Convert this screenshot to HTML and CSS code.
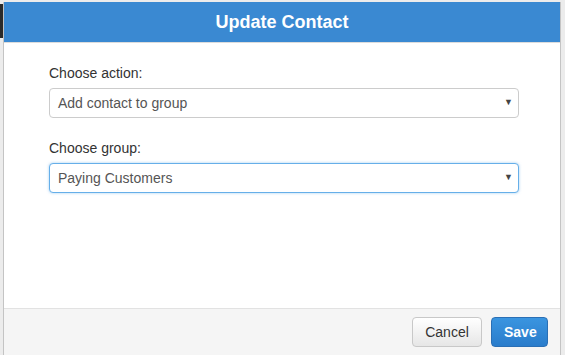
FILE: index.html
```html
<!DOCTYPE html>
<html>
<head>
<meta charset="utf-8">
<link rel="stylesheet" href="styles.css">
</head>
<body>
<div class="backdrop-strip"></div>
<div class="dialog">
  <div class="header">Update Contact</div>
  <div class="content">
    <div class="field">
      <label class="label">Choose action:</label>
      <div class="select">
        <span class="select-text">Add contact to group</span>
        <span class="caret">&#9660;</span>
      </div>
    </div>
    <div class="field">
      <label class="label">Choose group:</label>
      <div class="select focused">
        <span class="select-text">Paying Customers</span>
        <span class="caret">&#9660;</span>
      </div>
    </div>
  </div>
  <div class="footer">
    <button class="btn btn-default">Cancel</button>
    <button class="btn btn-primary">Save</button>
  </div>
</div>
</body>
</html>
```
FILE: styles.css
```css
html, body {
  margin: 0;
  padding: 0;
  height: 100%;
  overflow: hidden;
}
body {
  background: #ececec;
  font-family: "Liberation Sans", Arial, sans-serif;
  font-size: 14px;
  color: #333;
  padding: 2px 4px 0 3px;
  box-sizing: border-box;
}
.backdrop-strip {
  position: absolute;
  left: 0;
  top: 4px;
  width: 3px;
  height: 34px;
  background: #2a2a2a;
}
.dialog {
  height: calc(100% + 4px);
  background: #fff;
  border: 1px solid #c4c4c4;
  border-top: none;
  display: flex;
  flex-direction: column;
  box-sizing: border-box;
}
.header {
  height: 40px;
  flex: none;
  background: #3a89d2;
  color: #fff;
  font-weight: bold;
  font-size: 18px;
  display: flex;
  align-items: center;
  justify-content: center;
  border-bottom: 1px solid #dcdcdc;
}
.content {
  flex: 1;
  padding: 20px 41px 0 45px;
}
.field {
  margin-bottom: 20px;
}
.label {
  display: block;
  line-height: 20px;
  margin-bottom: 5px;
  color: #333;
}
.select {
  position: relative;
  height: 30px;
  border: 1px solid #cccccc;
  border-radius: 4px;
  box-sizing: border-box;
  display: flex;
  align-items: center;
  padding: 0 8px;
  background: #fff;
}
.select.focused {
  border-color: #66afe9;
  box-shadow: 0 0 3px rgba(102, 175, 233, 0.6);
}
.select-text {
  color: #555;
  font-size: 14px;
}
.caret {
  position: absolute;
  right: 5px;
  top: 8px;
  font-size: 9px;
  color: #444;
}
.footer {
  flex: none;
  height: 50px;
  background: #f5f5f5;
  border-top: 1px solid #e2e2e2;
  display: flex;
  justify-content: flex-end;
  align-items: flex-start;
  padding: 8px 12px 0 0;
  box-sizing: border-box;
  gap: 9px;
}
.btn {
  height: 30px;
  border-radius: 4px;
  font-family: "Liberation Sans", Arial, sans-serif;
  font-size: 14px;
  padding: 0 12px;
  cursor: pointer;
}
.btn-default {
  width: 70px;
  background: linear-gradient(#ffffff, #e6e6e6);
  border: 1px solid #c8c8c8;
  color: #333;
}
.btn-primary {
  width: 57px;
  background: linear-gradient(#3a95e0, #2a7ccb);
  border: 1px solid #2a6fb5;
  color: #fff;
  font-weight: bold;
}
```
